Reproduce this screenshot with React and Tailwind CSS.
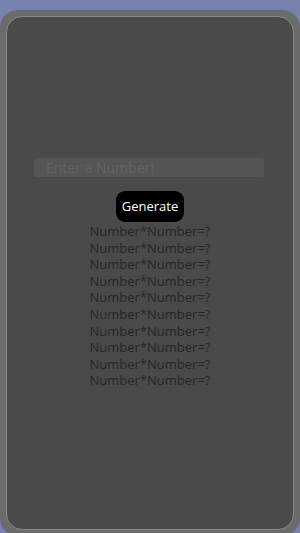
export default function App() {
  const rows = Array.from({ length: 10 }, (_, i) => i);
  return (
    <div className="h-[533px] w-[300px] overflow-hidden bg-[#7681ad] pt-[10px]" style={{ fontFamily: '"Open Sans", "Noto Sans", sans-serif' }}>
      <div className="h-[526px] rounded-[18px] bg-[#6b6b6b] p-[6px]">
        <div className="flex h-full flex-col items-center rounded-[16px] border border-[#8a8a8a] bg-[#4a4a4a] pt-[141px]">
          <input
            type="text"
            placeholder="Enter a Number!"
            className="ml-[-2px] h-[19px] w-[230px] rounded-[3px] bg-[#555555] px-[12px] text-[14px] text-[#ddd] outline-none placeholder-[#646464]"
          />
          <button className="mt-[14px] h-[31px] rounded-[9px] bg-black px-[6px] text-[13px] text-white">
            Generate
          </button>
          <div className="mt-[1px] flex flex-col items-center">
            {rows.map((i) => (
              <p key={i} className="text-[13px] leading-[16.6px] text-[#252525]">
                Number*Number=?
              </p>
            ))}
          </div>
        </div>
      </div>
    </div>
  );
}
